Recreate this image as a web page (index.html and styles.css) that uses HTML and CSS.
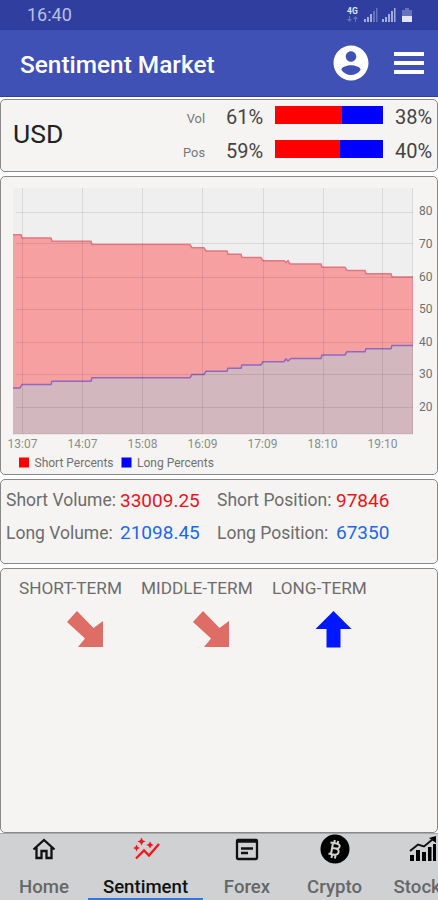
FILE: index.html
```html
<!DOCTYPE html>
<html lang="en">
<head>
  <meta charset="UTF-8">
  <meta name="viewport" content="width=device-width, initial-scale=1.0">
  <title>Sentiment Market</title>
  <link rel="stylesheet" href="styles.css">
</head>
<body>
  <div class="status">
    <span class="clock">16:40</span>
    <svg class="signals" width="68" height="18" viewBox="0 0 68 18">
      <text class="net" x="1" y="8">4G</text>
      <path class="dim" d="M1 13h2v-3h1v3h2l-2.500 3zM7 13l2.500-3 2.500 3h-2v3h-1v-3z"/>
      <path d="M18 13h2v3h-2zM21 11h2v5h-2zM24 8h2v8h-2zM36 13h2v3h-2zM39 11h2v5h-2zM42 8h2v8h-2zM45 5h2v11h-2zM48 2h1.500v14H48z"/>
      <path class="dim" d="M27 5h2v11h-2zM30 2h1.500v14H30zM59 2h4v2h3v6h-10V4h3z"/>
      <path class="full" d="M56 10h10v6H56z"/>
    </svg>
  </div>

  <header class="header">
    <h1>Sentiment Market</h1>
    <svg class="user" width="42" height="42" viewBox="0 0 24 24"><path d="M12 2C6.480 2 2 6.480 2 12s4.480 10 10 10 10-4.480 10-10S17.520 2 12 2zm0 3.300c1.660 0 3 1.340 3 3s-1.340 3-3 3-3-1.340-3-3 1.340-3 3-3zm0 13.600c-2.200 0-4.400-1.100-5.500-3 .03-1.700 3.500-2.600 5.500-2.600s5.470.9 5.500 2.600c-1.100 1.900-3.300 3-5.500 3z"/></svg>
    <div class="menu"><i></i><i></i><i></i></div>
  </header>

  <main>
    <section class="card summary">
      <div class="symbol">USD</div>
      <div class="rates">
        <span class="kind">Vol</span>
        <span>61%</span>
        <div class="bar"><div class="short" style="width: 62%"></div></div>
        <span>38%</span>
        <span class="kind">Pos</span>
        <span>59%</span>
        <div class="bar"><div class="short" style="width: 60%"></div></div>
        <span>40%</span>
      </div>
    </section>

    <section class="card chart">
      <svg width="436" height="297" viewBox="1 177 436 297">
        <rect class="plot" x="13" y="188" width="400" height="246"/>
        <path class="area-short" d="M13 234.750H21L22 238H51L52 241.250H91L92 244.500H190L192 247.750H204L206 251H227L228 254.250H241L242 257.500H261L263 260.750H284L286 262.500L288 260.750L290 264H321L322 267.250H345L347 270.500H365L366 273.750H391L392 277H413V434H13z"/>
        <path class="line-short" d="M13 234.750H21L22 238H51L52 241.250H91L92 244.500H190L192 247.750H204L206 251H227L228 254.250H241L242 257.500H261L263 260.750H284L286 262.500L288 260.750L290 264H321L322 267.250H345L347 270.500H365L366 273.750H391L392 277H413"/>
        <path class="area-long" d="M13 388H20L22 384.500H51L52 381.250H91L92 377.750H190L192 374.500H204L206 371.250H227L228 368.250H241L242 365H261L263 361.750H284L286 359L288 361L291 358.500H321L322 355H345L347 351.750H365L366 348.750H391L392 345.500H413V434H13z"/>
        <path class="line-long" d="M13 388H20L22 384.500H51L52 381.250H91L92 377.750H190L192 374.500H204L206 371.250H227L228 368.250H241L242 365H261L263 361.750H284L286 359L288 361L291 358.500H321L322 355H345L347 351.750H365L366 348.750H391L392 345.500H413"/>
        <path class="grid" d="M16 212.500H413M16 243.500H413M16 277.500H413M16 309.500H413M16 342.500H413M16 374.500H413M16 407.500H413M22.500 188V434M82.500 188V434M142.500 188V434M202.500 188V434M263.500 188V434M323.500 188V434M382.500 188V434M412.500 188V434M13 434H413"/>
        <g class="axis-y">
          <text x="419" y="215">80</text>
          <text x="419" y="247.500">70</text>
          <text x="419" y="280.500">60</text>
          <text x="419" y="313">50</text>
          <text x="419" y="345.500">40</text>
          <text x="419" y="378">30</text>
          <text x="419" y="411">20</text>
        </g>
        <g class="axis-x">
          <text x="22.500" y="448">13:07</text>
          <text x="82.500" y="448">14:07</text>
          <text x="142.500" y="448">15:08</text>
          <text x="202.500" y="448">16:09</text>
          <text x="262.500" y="448">17:09</text>
          <text x="322.500" y="448">18:10</text>
          <text x="382.500" y="448">19:10</text>
        </g>
        <rect class="key-short" x="19" y="457.500" width="10" height="10"/>
        <rect class="key-long" x="121.500" y="457.500" width="10" height="10"/>
        <g class="legend">
          <text x="34.500" y="467">Short Percents</text>
          <text x="137" y="467">Long Percents</text>
        </g>
      </svg>
    </section>

    <section class="card totals">
      <span>Short Volume:</span><b class="red">33009.25</b>
      <span>Short Position:</span><b class="red">97846</b>
      <span>Long Volume:</span><b class="blue">21098.45</b>
      <span>Long Position:</span><b class="blue">67350</b>
    </section>

    <section class="card terms">
      <div class="term">
        <span>SHORT-TERM</span>
        <svg class="down" width="37" height="37" viewBox="0 0 37 37"><path d="M10 0L26.500 17 36 10V36H11L18 27.500 0 11z"/></svg>
      </div>
      <div class="term">
        <span>MIDDLE-TERM</span>
        <svg class="down" width="37" height="37" viewBox="0 0 37 37"><path d="M10 0L26.500 17 36 10V36H11L18 27.500 0 11z"/></svg>
      </div>
      <div class="term">
        <span>LONG-TERM</span>
        <svg class="up" width="37" height="37" viewBox="0 0 37 37"><path d="M18.500 0L36.500 18H25.500V36.500H11.500V18H.5z"/></svg>
      </div>
    </section>
  </main>

  <nav class="tabs">
    <a class="tab">
      <svg width="30" height="30" viewBox="0 0 30 30"><path class="stroke" d="M4.500 15.500L15 6 25.500 15.500M7.500 13.500V24H12.500V17H17.500V24H22.500V13.500"/></svg>
      <span>Home</span>
    </a>
    <a class="tab active">
      <svg width="30" height="30" viewBox="0 0 30 30"><path class="stroke trend" d="M5 24.500L13 16.500 18 21.500 28 10"/><path class="spark" d="M10.500 3.500l1.300 2.700 2.700 1.300-2.700 1.300-1.300 2.700-1.300-2.700L6.500 7.500l2.700-1.300zM19 7.500l1.200 2.300 2.300 1.200-2.300 1.200-1.200 2.300-1.200-2.300-2.300-1.200 2.300-1.200zM5.500 10.500l1.100 2.400L9 14l-2.400 1.100-1.100 2.400-1.100-2.400L2 14l2.400-1.100z"/></svg>
      <span>Sentiment</span>
    </a>
    <a class="tab">
      <svg width="30" height="30" viewBox="0 0 30 30"><rect class="stroke" x="5" y="6" width="20" height="19" rx="1"/><path class="stroke" d="M5 7.500H25M9 14.500H21M9 19H16"/></svg>
      <span>Forex</span>
    </a>
    <a class="tab">
      <svg width="30" height="30" viewBox="0 0 30 30"><circle cx="15" cy="15" r="14.500"/><path class="coin" d="M10.500 8.500L16.500 9.500Q20.500 10.500 19.500 13 18.800 15 15.500 14.500L12.500 14M15.500 14.500Q19.500 15.500 18.500 18.500 17.500 21.500 13 20.500L8.500 19.500M13 9L11 20M14.800 6L14.300 9M18.300 7L17.700 9.500M12 21L11.500 24M15.500 21L15 24.500"/></svg>
      <span>Crypto</span>
    </a>
    <a class="tab">
      <svg width="30" height="30" viewBox="0 0 30 30"><path d="M3 21h4v6H3zM9 16h4v11H9zM15 18h4v9h-4zM21 13h3.500v14H21zM26 10h3v17h-3zM29 2v7l-7-5z"/><path class="stocks" d="M3 17L11 10.500 17 12.500 26 5"/></svg>
      <span>Stocks</span>
    </a>
  </nav>
</body>
</html>
```

FILE: styles.css
```css
* {
  box-sizing: border-box;
}

body {
  margin: 0;
  width: 438px;
  height: 900px;
  overflow: hidden;
  display: flex;
  flex-direction: column;
  background: #fff;
  font-family: Roboto, "Liberation Sans", sans-serif;
  color: #6c6c6c;
}

.status {
  height: 30px;
  padding: 0 24px 0 27px;
  display: flex;
  align-items: center;
  justify-content: space-between;
  background: #303f9f;
}
.clock {
  font-size: 18px;
  line-height: 30px;
  color: #b9bfe3;
}
.signals {
  fill: #a4acdb;
}
.signals .dim {
  fill: #6672b9;
}
.signals .full,
.signals .net {
  fill: #e3e5f4;
}
.net {
  font-size: 8.5px;
  font-weight: 700;
}

.header {
  height: 67px;
  padding: 0 14px 0 20px;
  display: flex;
  align-items: center;
  background: #3f51b5;
  border-bottom: 1px solid #303f9f;
}
.header h1 {
  flex: 1;
  margin: 0;
  padding-top: 3px;
  font-size: 24.4px;
  font-weight: 500;
  color: #fff;
}
.user {
  fill: #fff;
  margin-right: 22px;
}
.menu {
  width: 30px;
  display: grid;
  gap: 5px;
}
.menu i {
  height: 4px;
  background: #fff;
}

main {
  height: 736px;
  padding-top: 2px;
  display: flex;
  flex-direction: column;
  gap: 4px;
}
.card {
  background: #f5f4f3;
  border: 1px solid #888;
  border-radius: 5px;
}

.summary {
  height: 73px;
  padding: 0 5px 0 12px;
  display: flex;
  justify-content: space-between;
}
.symbol {
  font-size: 26.5px;
  line-height: 68px;
  color: #222;
}
.rates {
  display: grid;
  grid-template-columns: 33px 37px 108px 37px;
  column-gap: 12px;
  grid-template-rows: 33px 35px;
  align-items: center;
  text-align: right;
  font-size: 20px;
  color: #444;
}
.rates .kind {
  padding: 4px 9px 0 0;
  font-size: 12.8px;
  color: #777;
}
.bar {
  height: 18px;
  margin-top: -4px;
  background: #00f;
}
.short {
  height: 18px;
  background: #f00;
}

.chart {
  height: 299px;
}
.chart svg {
  display: block;
}
.plot {
  fill: #efefef;
}
.area-short {
  fill: #f6a0a2;
}
.area-long {
  fill: #d3b7be;
}
.line-short,
.line-long {
  fill: none;
  stroke: #e17780;
  stroke-width: 1.5;
}
.line-long {
  stroke: #9068bd;
}
.grid {
  fill: none;
  stroke: #000;
  stroke-opacity: .09;
}
.axis-x,
.axis-y,
.legend {
  font-size: 12px;
  fill: #707070;
}
.axis-x {
  text-anchor: middle;
  fill: #8c8c8c;
}
.key-short {
  fill: #f00;
}
.key-long {
  fill: #00f;
}

.totals {
  height: 85px;
  padding: 4px 5px 0;
  display: grid;
  grid-template-columns: 113px 98px 118px 80px;
  grid-template-rows: 32px 33px;
  align-items: center;
  font-size: 17.5px;
  white-space: nowrap;
}
.totals b {
  padding-left: 1px;
  font-size: 19px;
  font-weight: 400;
}
.red {
  color: #e9131d;
}
.blue {
  color: #1d68e8;
}

.terms {
  height: 265px;
  padding: 8px 0 0 18px;
  display: grid;
  grid-template-columns: 122px 131px 110px;
  align-content: start;
  font-size: 17.2px;
  line-height: 22px;
}
.term {
  display: flex;
  flex-direction: column;
}
.term svg {
  margin: 12px 0 0 48px;
}
.term:nth-child(2) svg {
  margin-left: 52px;
}
.term:nth-child(3) svg {
  margin-left: 43px;
}
.down {
  fill: #dd6d65;
}
.up {
  fill: #0018ff;
}

.tabs {
  height: 67px;
  display: grid;
  grid-template-columns: 88px 115px 88px 87px 88px;
  background: #cfd1d2;
  border-top: 1px solid #aaa;
}
.tab {
  height: 66px;
  display: flex;
  flex-direction: column;
  align-items: center;
  font-size: 18.6px;
  font-weight: 500;
  color: #656768;
}
.tab span {
  margin-top: 12px;
  line-height: 22px;
}
.tab.active {
  color: #111;
  border-bottom: 2px solid #2878ee;
}
.stroke {
  fill: none;
  stroke: #111;
  stroke-width: 2.3;
}
.trend {
  stroke: #f8121b;
}
.spark {
  fill: #f8121b;
}
.coin {
  fill: none;
  stroke: #d5d5d5;
  stroke-width: 2;
}
.stocks {
  fill: none;
  stroke: #111;
  stroke-width: 2;
}
```
